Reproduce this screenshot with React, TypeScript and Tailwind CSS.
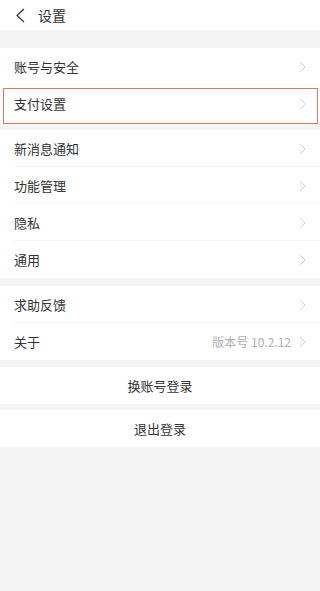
import React from "react";

const font = { fontFamily: '"Noto Sans CJK SC", "Noto Sans", sans-serif' };

function Chevron() {
  return (
    <svg width="7" height="12" viewBox="0 0 7 12" fill="none" className="shrink-0">
      <path d="M1 1 L6 6 L1 11" stroke="#cfcfcf" strokeWidth="1" />
    </svg>
  );
}

function Row({ label, extra, last }: { label: string; extra?: string; last?: boolean }) {
  return (
    <div className="relative flex h-[37px] items-center bg-white pl-[14px] pr-[14px]">
      <span className="flex-1 text-[13px] text-[#333]">{label}</span>
      {extra && <span className="mr-[8px] text-[12px] text-[#b0b0b0]">{extra}</span>}
      <Chevron />
      {!last && <div className="absolute bottom-0 left-[14px] right-0 h-px bg-[#f5f5f5]" />}
    </div>
  );
}

export default function App() {
  return (
    <div className="flex min-h-[591px] flex-col bg-[#f4f4f4]" style={font}>
      <div className="flex h-[30px] items-center bg-white pl-[15px]">
        <svg width="11" height="15" viewBox="0 0 11 15" fill="none">
          <path d="M9 1 L2 7.5 L9 14" stroke="#333" strokeWidth="1.2" />
        </svg>
        <span className="ml-[12px] text-[14px] text-[#333]">设置</span>
      </div>

      <div className="mt-[18px]">
        <Row label="账号与安全" />
        <div className="relative">
          <Row label="支付设置" last />
          <div className="pointer-events-none absolute left-[3px] right-[2px] top-[3px] h-[36px] border border-[#d9796c]" />
        </div>
      </div>

      <div className="mt-[8px]">
        <Row label="新消息通知" />
        <Row label="功能管理" />
        <Row label="隐私" />
        <Row label="通用" last />
      </div>

      <div className="mt-[8px]">
        <Row label="求助反馈" />
        <Row label="关于" extra="版本号 10.2.12" last />
      </div>

      <div className="mt-[7px] flex h-[37px] items-center justify-center bg-white text-[13px] text-[#333]">
        换账号登录
      </div>
      <div className="mt-[6px] flex h-[37px] items-center justify-center bg-white text-[13px] text-[#333]">
        退出登录
      </div>
    </div>
  );
}
